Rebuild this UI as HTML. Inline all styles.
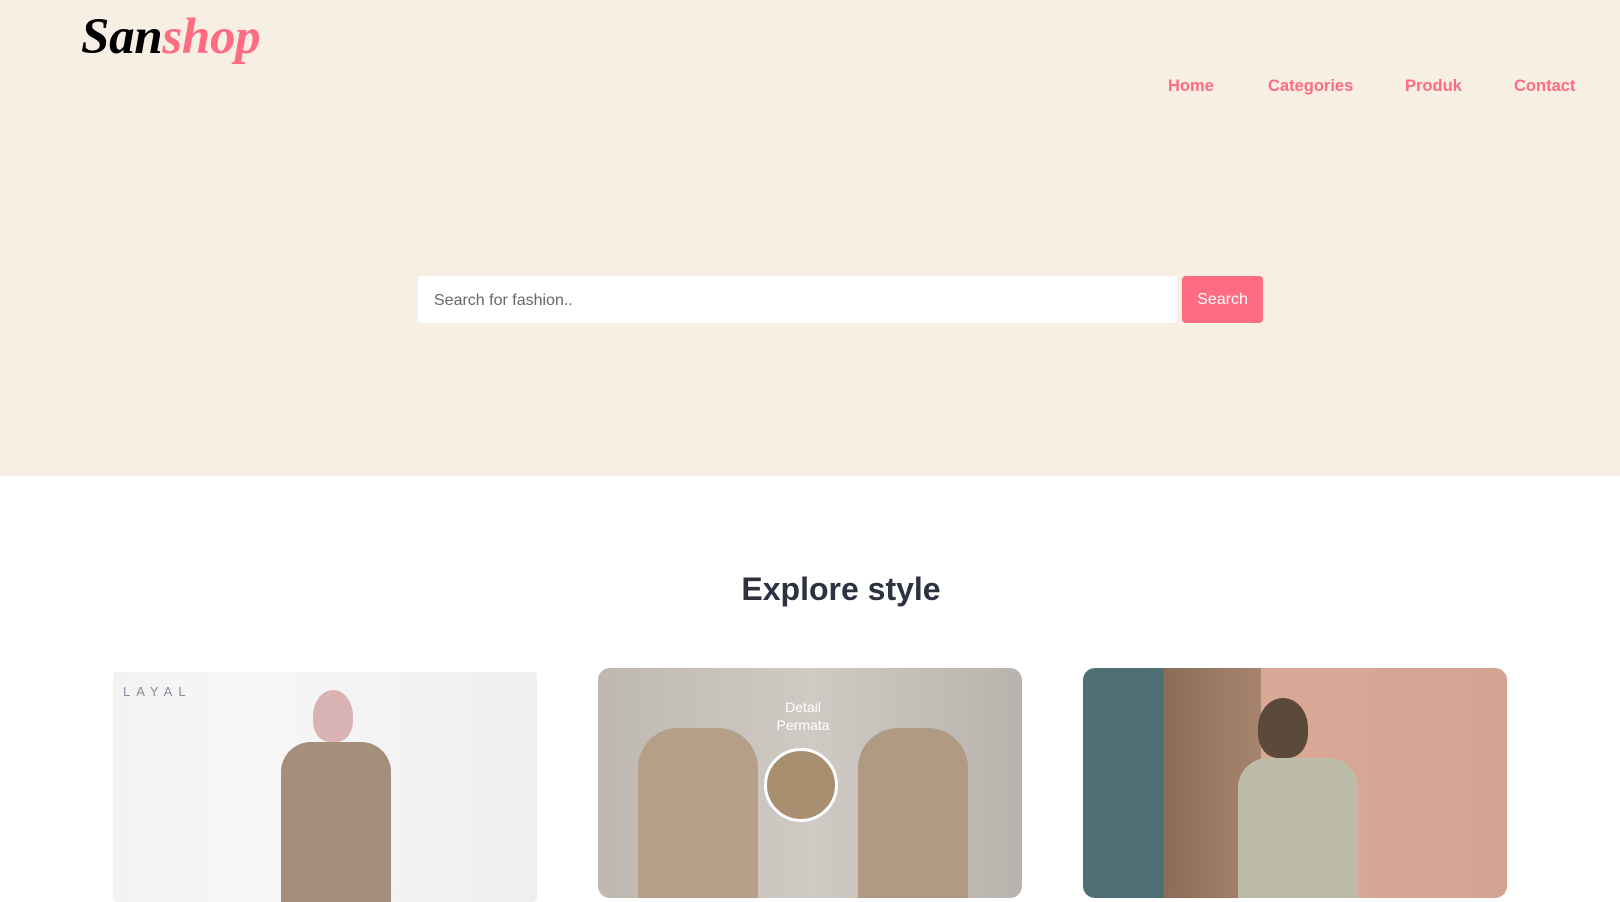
<!DOCTYPE html>
<html><head><meta charset="utf-8"><style>
*{margin:0;padding:0;box-sizing:border-box}
body{width:1620px;height:880px;overflow:hidden;background:#fff;font-family:"Liberation Sans",sans-serif}
.hero{position:absolute;left:0;top:0;width:1620px;height:476px;background:#f7efe4}
.logo{position:absolute;left:81px;top:8px;font-family:"Liberation Serif",serif;font-style:italic;font-weight:bold;font-size:51px;color:#000;letter-spacing:-0.3px}
.logo span{color:#ff6b81}
.nav a{position:absolute;top:77px;font-size:16.5px;font-weight:bold;color:#ff6b81;text-decoration:none}
.inp{position:absolute;left:418px;top:276px;width:759px;height:47px;background:#fff;border-radius:4px;font-size:16px;color:#666;padding:16px 0 0 16px}
.btn{position:absolute;left:1182px;top:276px;width:81px;height:47px;background:#ff6b81;border-radius:4px;color:#fff;font-size:16px;text-align:center;line-height:48px}
h2{position:absolute;top:571px;left:0;width:1682px;text-align:center;font-size:32px;color:#2d3142}
.card{position:absolute;top:668px;width:424px;height:230px;border-radius:12px;overflow:hidden}
</style></head><body>
<div class="hero">
<div class="logo">San<span>shop</span></div>
<div class="nav"><a style="left:1168px">Home</a><a style="left:1268px">Categories</a><a style="left:1405px">Produk</a><a style="left:1514px">Contact</a></div>
<div class="inp">Search for fashion..</div>
<div class="btn">Search</div>
</div>
<h2>Explore style</h2>
<div class="card" style="left:113px;top:672px;border-radius:4px;background:linear-gradient(90deg,#f4f1f1 0%,#f7f7f8 30%,#efeef0 100%)">
<div style="position:absolute;left:200px;top:18px;width:40px;height:52px;background:#d9b3b3;border-radius:50% 50% 40% 40%"></div>
<div style="position:absolute;left:168px;top:70px;width:110px;height:160px;background:#a58f7b;border-radius:30px 30px 0 0"></div>
<div style="position:absolute;left:10px;top:12px;font-size:13px;letter-spacing:6px;color:#8a8a9a">LAYAL</div>
</div>
<div class="card" style="left:598px;background:linear-gradient(90deg,#bdb8b0,#cfcac4 50%,#b8b3ac)">
<div style="position:absolute;left:40px;top:60px;width:120px;height:170px;background:#b59f88;border-radius:40px 40px 0 0"></div>
<div style="position:absolute;left:260px;top:60px;width:110px;height:170px;background:#b09a84;border-radius:40px 40px 0 0"></div>
<div style="position:absolute;left:166px;top:80px;width:74px;height:74px;border:3px solid #fff;border-radius:50%;background:#a78f70"></div>
<div style="position:absolute;left:160px;top:30px;width:90px;text-align:center;color:#fff;font-size:14px;line-height:18px">Detail<br>Permata</div>
</div>
<div class="card" style="left:1083px;background:linear-gradient(90deg,#4e6f73 0,#4e6f73 19%,#8c6c58 19%,#a7846d 42%,#d9a896 42%,#d4a493 100%)">
<div style="position:absolute;left:175px;top:30px;width:50px;height:60px;background:#5b4a3a;border-radius:50% 50% 40% 40%"></div>
<div style="position:absolute;left:155px;top:90px;width:120px;height:140px;background:#bcbca8;border-radius:30px 30px 0 0"></div>
</div>
</body></html>
